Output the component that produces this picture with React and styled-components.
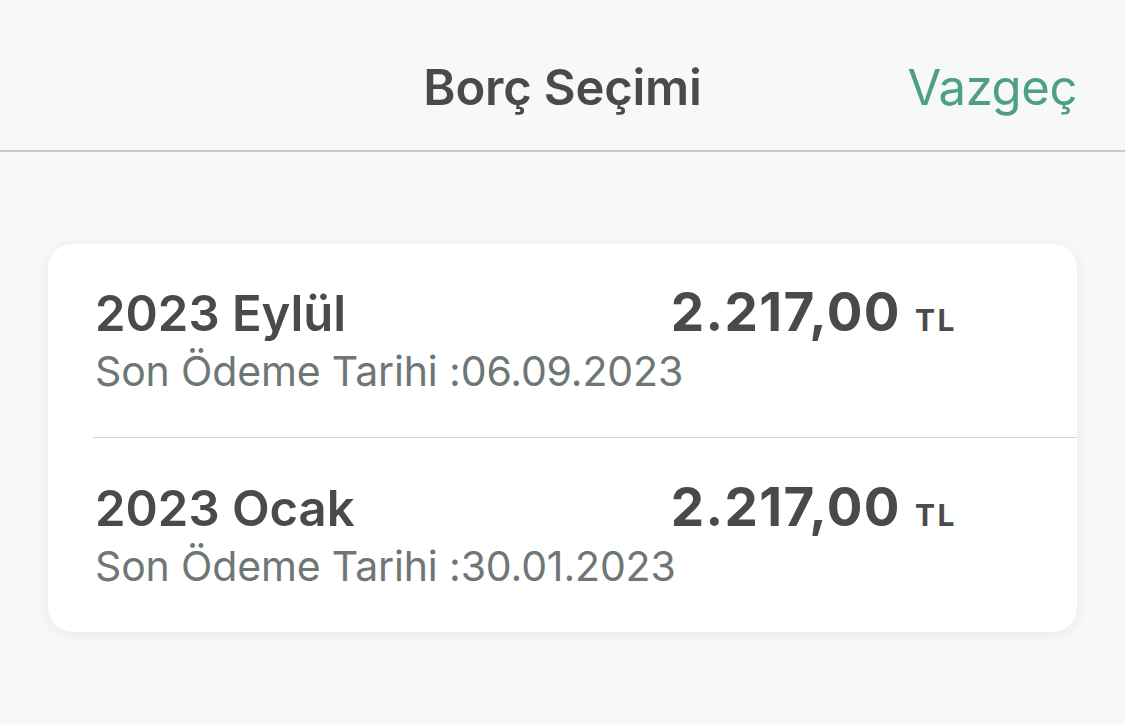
import React from "react";
import styled, { createGlobalStyle } from "styled-components";

const Global = createGlobalStyle`
  html, body { margin: 0; padding: 0; background: #f7f9f9; }
  body { font-family: Inter, Roboto, "Noto Sans", sans-serif; -webkit-font-smoothing: antialiased; }
`;

const Page = styled.div`
  width: 1125px;
  height: 724px;
  background: #f7f9f9;
  overflow: hidden;
`;

const Header = styled.header`
  box-sizing: border-box;
  height: 152px;
  padding: 58px 48px 0;
  border-bottom: 2px solid #c8c8cd;
  display: grid;
  grid-template-columns: 1fr auto 1fr;
  align-items: start;
`;

const Title = styled.h1`
  grid-column: 2;
  margin: 0;
  font-size: 49px;
  line-height: 60px;
  font-weight: 600;
  color: #4a4a4a;
  letter-spacing: -0.2px;
`;

const Cancel = styled.button`
  grid-column: 3;
  justify-self: end;
  border: 0;
  background: none;
  padding: 0;
  font-family: inherit;
  font-size: 49px;
  line-height: 60px;
  font-weight: 400;
  color: #4f9e87;
  letter-spacing: -0.4px;
  cursor: pointer;
`;

const Card = styled.div`
  margin: 92px 48px 0;
  background: #fff;
  border-radius: 24px;
  box-shadow: 0 2px 14px rgba(0, 0, 0, 0.07);
  overflow: hidden;
`;

const Row = styled.div`
  display: grid;
  grid-template-columns: 1fr auto;
  align-items: baseline;
  padding: ${(p) => (p.$first ? "40px" : "41px")} 120px ${(p) => (p.$last ? "42px" : "42px")} 47px;
`;

const Period = styled.div`
  font-size: 49px;
  line-height: 56px;
  font-weight: 600;
  color: #4a4a4a;
`;

const Amount = styled.div`
  font-size: 53px;
  line-height: 56px;
  font-weight: 700;
  color: #4a4a4a;
  letter-spacing: 1.4px;
`;

const Currency = styled.span`
  font-size: 30px;
  font-weight: 700;
  margin-left: 14px;
  letter-spacing: 2.5px;
`;

const DueDate = styled.div`
  grid-column: 1 / span 2;
  margin-top: -1px;
  font-size: 41px;
  line-height: 48px;
  font-weight: 400;
  color: #6f7676;
  letter-spacing: -0.15px;
`;

const Divider = styled.div`
  height: 1px;
  margin-left: 45px;
  background: #d2d2d2;
`;

const debts = [
  { period: "2023 Eylül", amount: "2.217,00", due: "06.09.2023" },
  { period: "2023 Ocak", amount: "2.217,00", due: "30.01.2023" },
];

export default function App() {
  return (
    <Page>
      <Global />
      <Header>
        <Title>Borç Seçimi</Title>
        <Cancel>Vazgeç</Cancel>
      </Header>
      <Card>
        {debts.map((d, i) => (
          <React.Fragment key={d.period}>
            {i > 0 && <Divider />}
            <Row $first={i === 0} $last={i === debts.length - 1}>
              <Period>{d.period}</Period>
              <Amount>
                {d.amount}
                <Currency>TL</Currency>
              </Amount>
              <DueDate>Son Ödeme Tarihi :{d.due}</DueDate>
            </Row>
          </React.Fragment>
        ))}
      </Card>
    </Page>
  );
}
